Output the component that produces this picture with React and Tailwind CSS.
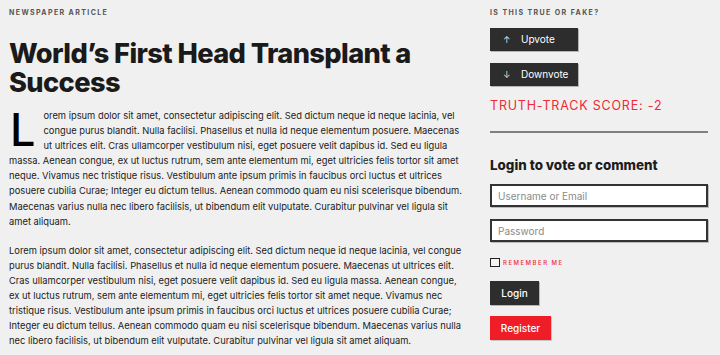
import React from 'react';

const LOREM =
  'orem ipsum dolor sit amet, consectetur adipiscing elit. Sed dictum neque id neque lacinia, vel congue purus blandit. Nulla facilisi. Phasellus et nulla id neque elementum posuere. Maecenas ut ultrices elit. Cras ullamcorper vestibulum nisi, eget posuere velit dapibus id. Sed eu ligula massa. Aenean congue, ex ut luctus rutrum, sem ante elementum mi, eget ultricies felis tortor sit amet neque. Vivamus nec tristique risus. Vestibulum ante ipsum primis in faucibus orci luctus et ultrices posuere cubilia Curae; Integer eu dictum tellus. Aenean commodo quam eu nisi scelerisque bibendum. Maecenas varius nulla nec libero facilisis, ut bibendum elit vulputate. Curabitur pulvinar vel ligula sit amet aliquam.';

function VoteButton({ arrow, label }) {
  return (
    <button
      type="button"
      className="flex items-center w-[88px] h-[23px] bg-[#2d2d2d] text-white text-[10px] shadow-[1px_1px_0_#b5b5b5] pl-[13px]"
    >
      <span className="text-[9px] w-[18px] text-left text-[#ddd]">{arrow}</span>
      <span>{label}</span>
    </button>
  );
}

export default function App() {
  return (
    <div
      className="min-h-[355px] bg-[#f0f0f0] text-[#1a1a1a] flex pl-[9px] pr-[12px] pt-[9px]"
      style={{ fontFamily: 'Inter, "Noto Sans", sans-serif' }}
    >
      {/* Article */}
      <div className="w-[456px]">
        <p className="text-[7px] font-bold tracking-[0.2em] text-[#555] uppercase leading-[8px]">
          Newspaper Article
        </p>
        <h1 className="mt-[23px] text-[27.2px] font-extrabold leading-[28.5px] tracking-[-0.022em] text-[#1a1a1a]">
          World’s First Head Transplant a Success
        </h1>
        <p className="mt-[11px] text-[9.35px] leading-[15.1px]">
          <span className="float-left text-[45px] leading-[36px] font-medium text-black mr-[8px] ml-[1px] mt-[4px] mb-[2px]">
            L
          </span>
          {LOREM}
        </p>
        <p className="mt-[14px] text-[9.35px] leading-[15.1px]">L{LOREM}</p>
      </div>

      {/* Sidebar */}
      <div className="ml-[25px] w-[218px] flex flex-col">
        <p className="text-[7px] font-bold tracking-[0.2em] text-[#555] uppercase leading-[8px]">
          Is this true or fake?
        </p>
        <div className="mt-[11px] flex flex-col gap-[12px]">
          <VoteButton arrow="↑" label="Upvote" />
          <VoteButton arrow="↓" label="Downvote" />
        </div>
        <p className="mt-[12px] text-[12.5px] tracking-[0.065em] text-[#ee2a36] uppercase leading-[15px]">
          Truth-Track Score: -2
        </p>
        <div className="mt-[18px] h-[2px] bg-[#808080]" />
        <h2 className="mt-[24px] text-[13.4px] font-extrabold text-[#1d1d1d] leading-[17px]">
          Login to vote or comment
        </h2>
        <div className="mt-[10px] flex flex-col gap-[12px]">
          <input
            type="text"
            placeholder="Username or Email"
            className="h-[23px] bg-white border-2 border-[#333] px-[6px] text-[10px] outline-none placeholder:text-[#8a8a8a] shadow-[1px_1px_0_#bbb]"
          />
          <input
            type="password"
            placeholder="Password"
            className="h-[23px] bg-white border-2 border-[#333] px-[6px] text-[10px] outline-none placeholder:text-[#8a8a8a] shadow-[1px_1px_0_#bbb]"
          />
        </div>
        <label className="mt-[16px] flex items-center gap-[3px]">
          <span className="w-[10px] h-[9px] border-[1.5px] border-[#222] bg-[#f4f4f4]" />
          <span className="text-[6px] font-medium tracking-[0.25em] text-[#ee2a36] uppercase">
            Remember me
          </span>
        </label>
        <button
          type="button"
          className="mt-[14px] w-[49px] h-[24px] bg-[#2d2d2d] text-white text-[10px] font-medium shadow-[1px_1px_0_#b5b5b5]"
        >
          Login
        </button>
        <button
          type="button"
          className="mt-[11px] w-[61px] h-[24px] bg-[#ee1d27] text-white text-[10px] font-medium shadow-[1px_1px_0_#c5c5c5]"
        >
          Register
        </button>
      </div>
    </div>
  );
}
